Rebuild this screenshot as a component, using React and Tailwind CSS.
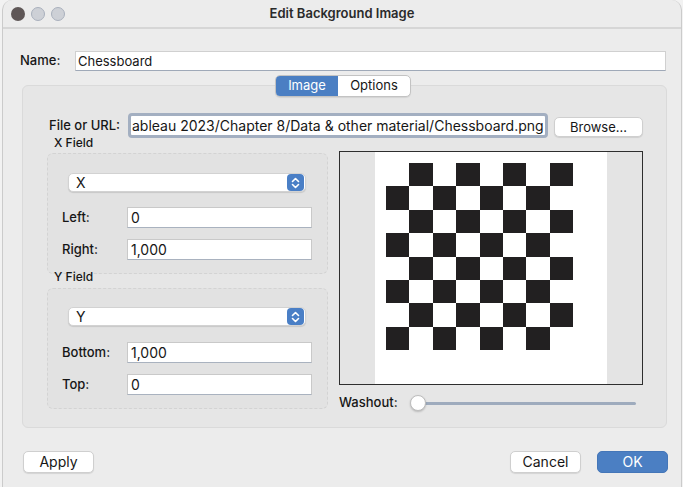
const fieldInput =
  "h-[21px] bg-white border border-[#c9c9c9] border-b-[#a9b2bf] px-[3px] text-[14px] leading-[19px] text-[#161616]";

const Stepper = () => (
  <div className="w-[17px] h-[17px] rounded-[4px] bg-[#4a7fc6] flex items-center justify-center">
    <svg width="9" height="12" viewBox="0 0 9 12" fill="none" stroke="white" strokeWidth="1.6" strokeLinecap="round" strokeLinejoin="round">
      <path d="M1.5 4.5 L4.5 1.5 L7.5 4.5" />
      <path d="M1.5 7.5 L4.5 10.5 L7.5 7.5" />
    </svg>
  </div>
);

const Select = ({ value }) => (
  <div className="h-[19px] bg-white rounded-[5px] border border-[#d2d2d2] shadow-[0_1px_1px_rgba(0,0,0,0.12)] flex items-center justify-between pl-[7px] pr-[1px] text-[14px] text-[#161616]">
    <span>{value}</span>
    <Stepper />
  </div>
);

const FieldRow = ({ label, value, className }) => (
  <div className={`flex items-center ${className}`}>
    <span className="w-[65px] pl-[14px] text-[13px] font-medium text-[#161616] box-content">{label}</span>
    <div className={`${fieldInput} w-[185px]`}>{value}</div>
  </div>
);

const GroupBox = ({ children, className }) => (
  <div className={`w-[281px] h-[121px] rounded-[6px] border border-dashed border-[#d3d3d3] bg-[#e2e2e2] ${className}`}>
    {children}
  </div>
);

const Button = ({ children, primary }) => (
  <button
    className={`w-[71px] h-[22px] rounded-[5px] text-[14px] leading-[20px] ${
      primary
        ? "bg-[#4b7fc3] text-white border border-[#4476b8]"
        : "bg-white text-[#161616] border border-[#cfcfcf] shadow-[0_1px_1px_rgba(0,0,0,0.1)]"
    }`}
  >
    {children}
  </button>
);

const Chessboard = () => {
  const cells = [];
  for (let r = 0; r < 8; r++) {
    for (let c = 0; c < 8; c++) {
      cells.push(
        <div key={`${r}-${c}`} className={(r + c) % 2 === 1 ? "bg-[#222021]" : "bg-white"} />
      );
    }
  }
  return <div className="grid grid-cols-8 grid-rows-8 w-[187px] h-[187px]">{cells}</div>;
};

export default function App() {
  return (
    <div className="w-[683px] h-[487px] bg-[#f2f2f2] pl-[2px] overflow-hidden" style={{ fontFamily: "Inter, 'Liberation Sans', sans-serif" }}>
      <div className="w-[680px] h-[487px] bg-[#ececec] border-l border-r border-[#cbcbcb] rounded-tl-[10px] rounded-tr-[10px] flex flex-col">
        {/* title bar */}
        <div className="h-[29px] border-b-2 border-[#d6d6d6] flex items-center relative shrink-0">
          <div className="flex items-center gap-[6px] pl-[8px]">
            <span className="w-[14px] h-[14px] rounded-full bg-[#5f5757]" />
            <span className="w-[14px] h-[14px] rounded-full bg-[#cdd0d6] border border-[#a9b0bd]" />
            <span className="w-[14px] h-[14px] rounded-full bg-[#cdd0d6] border border-[#a9b0bd]" />
          </div>
          <div className="absolute inset-0 flex items-center justify-center text-[13px] font-semibold text-[#2a2a2a] pointer-events-none">
            Edit Background Image
          </div>
        </div>

        {/* name row */}
        <div className="flex items-center mt-[22px] pl-[17px]">
          <span className="w-[55px] text-[13px] font-medium text-[#161616]">Name:</span>
          <div className="w-[591px] h-[20px] bg-white border border-[#d0d0d0] border-b-[#9fa9b8] px-[2px] text-[13px] leading-[18px] text-[#161616]">
            Chessboard
          </div>
        </div>

        {/* tabs */}
        <div className="flex justify-center mt-[4px] relative z-10 pl-[2px]">
          <div className="flex h-[22px] rounded-[5px] border border-[#c3c3c3] bg-white overflow-hidden text-[13px] shadow-[0_1px_1px_rgba(0,0,0,0.08)]">
            <div className="w-[62px] bg-[#4b7fc3] text-white flex items-center justify-center">Image</div>
            <div className="w-[72px] text-[#161616] flex items-center justify-center">Options</div>
          </div>
        </div>

        {/* panel */}
        <div className="ml-[19px] w-[645px] h-[343px] -mt-[12px] rounded-[6px] border border-[#dadada] bg-[#e6e6e6] pl-[24px] pt-[27px]">
          <div className="flex items-center">
            <span className="w-[73px] text-right text-[13px] font-medium text-[#161616] whitespace-nowrap">File or URL:</span>
            <div className="ml-[8px] w-[420px] h-[25px] rounded-[4px] border-[3px] border-[#a3afc1] bg-white pl-[1px] text-[14px] leading-[19px] text-[#161616] whitespace-nowrap overflow-hidden flex items-center">
              <span>ableau 2023/Chapter 8/Data &amp; other material/Chessboard.png</span>
              <span className="w-px h-[15px] bg-black ml-[1px] shrink-0" />
            </div>
            <div className="ml-[6px]">
              <button className="w-[89px] h-[20px] rounded-[5px] bg-white border border-[#cfcfcf] shadow-[0_1px_1px_rgba(0,0,0,0.1)] text-[13px] leading-[18px] text-[#161616]">
                Browse...
              </button>
            </div>
          </div>

          <div className="flex gap-[11px] -mt-[2px]">
            {/* left column */}
            <div className="w-[281px] flex flex-col">
              <div className="h-[14px] leading-[14px] pl-[7px] text-[12px] font-medium text-[#161616]">X Field</div>
              <GroupBox className="mt-[3px] pt-[19px]">
                <div className="pl-[20px] w-[258px]">
                  <Select value="X" />
                </div>
                <FieldRow label="Left:" value="0" className="mt-[15px]" />
                <FieldRow label="Right:" value="1,000" className="mt-[11px]" />
              </GroupBox>
              <div className="h-[14px] leading-[14px] pl-[7px] text-[12px] font-medium text-[#161616] -mt-[4px]">Y Field</div>
              <GroupBox className="mt-[4px] pt-[18px]">
                <div className="pl-[20px] w-[258px]">
                  <Select value="Y" />
                </div>
                <FieldRow label="Bottom:" value="1,000" className="mt-[16px]" />
                <FieldRow label="Top:" value="0" className="mt-[11px]" />
              </GroupBox>
            </div>

            {/* right column */}
            <div className="w-[304px] flex flex-col">
              <div className="mt-[15px] h-[234px] border border-[#2e2e2e] flex">
                <div className="w-[35px] bg-[#e4e4e4]" />
                <div className="w-[232px] bg-white pl-[11px] pt-[11px]">
                  <Chessboard />
                </div>
                <div className="flex-1 bg-[#e4e4e4]" />
              </div>
              <div className="mt-[8px] h-[20px] flex items-center">
                <span className="text-[13px] font-medium text-[#161616] w-[63px]">Washout:</span>
                <div className="relative flex-1 h-[20px] flex items-center">
                  <div className="ml-[16px] w-[218px] h-[3px] rounded-full bg-[#9eabbd]" />
                  <div className="absolute left-[8px] top-[2px] w-[16px] h-[16px] rounded-full bg-white border border-[#bdbdbd] shadow-[0_1px_2px_rgba(0,0,0,0.2)]" />
                </div>
              </div>
            </div>
          </div>
        </div>

        {/* bottom buttons */}
        <div className="flex items-center mt-[23px] pl-[20px] pr-[13px]">
          <Button>Apply</Button>
          <div className="flex-1" />
          <Button>Cancel</Button>
          <div className="w-[16px]" />
          <Button primary>OK</Button>
        </div>
      </div>
    </div>
  );
}
